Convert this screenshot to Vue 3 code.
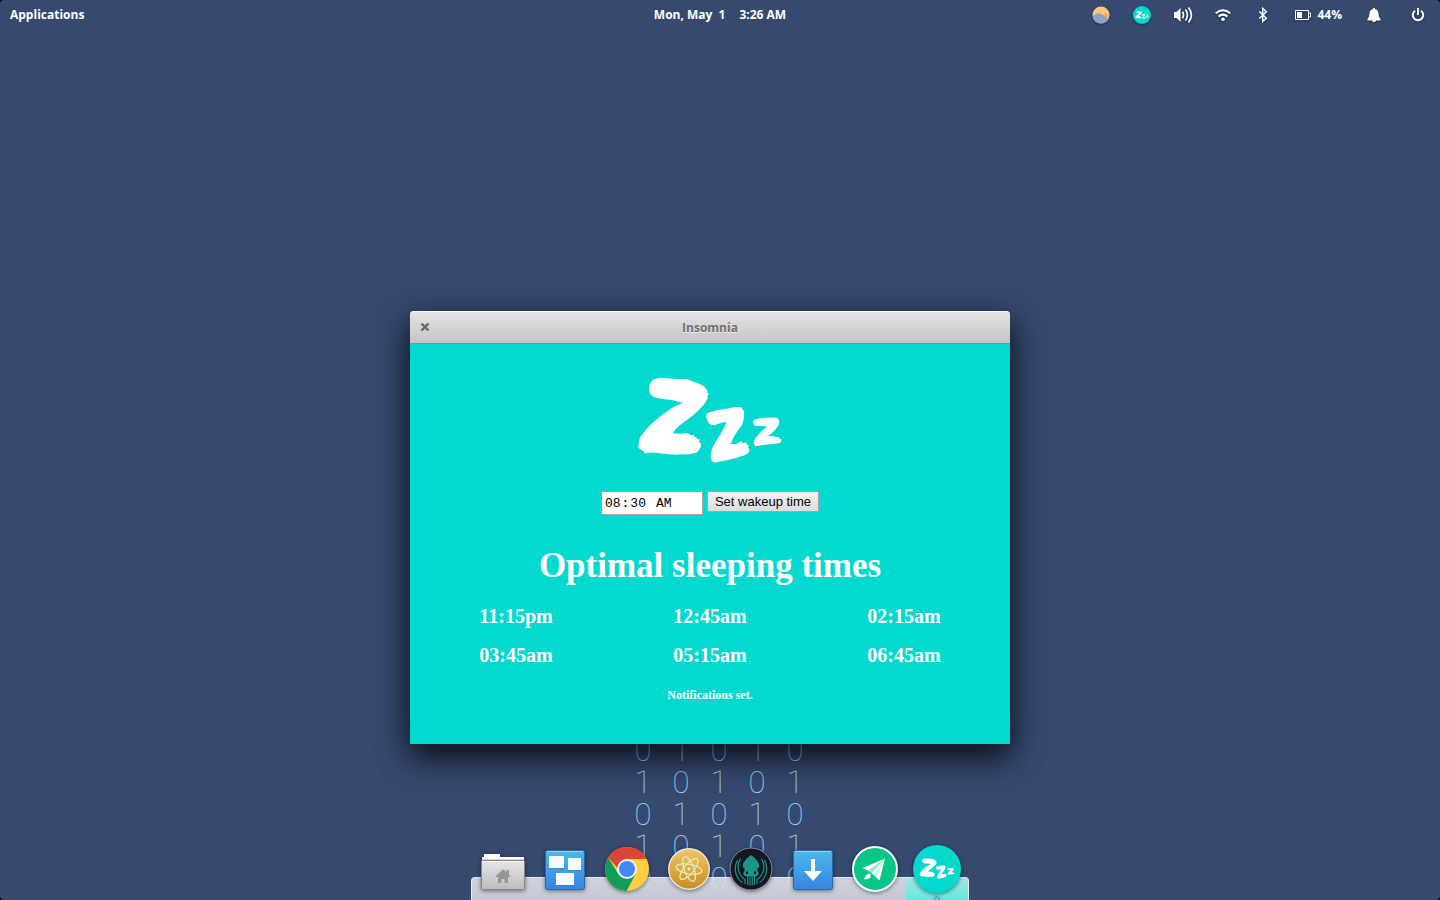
<script setup>
import { ref } from 'vue'

const wakeup = ref('08:30')
const times = [
  ['11:15pm', '12:45am', '02:15am'],
  ['03:45am', '05:15am', '06:45am'],
]
const binary = ['0 1 0 1 0', '1 0 1 0 1', '0 1 0 1 0', '1 0 1 0 1', '0 1 0 1 0']
</script>

<template>
  <div class="desktop">
    <svg class="defs" aria-hidden="true">
      <defs>
        <symbol id="zzz" viewBox="50 33 440 262">
          <path d="M100 42Q118 34 132 38L160 40 200 41 225 50Q252 58 257 69L262 76 260 80 266 84 262 94 264 97Q257 112 245 125Q225 148 185 175Q165 190 158 204Q185 207 196 203L210 206 207 210 222 209 220 214Q232 216 231 222L240 222 236 229 243 235Q244 248 232 261L205 268Q180 266 165 269L130 266 100 262 72 264 70 258Q50 250 54 238L57 235Q54 218 66 207Q90 175 130 145Q165 120 188 113Q170 105 140 102L110 98Q92 94 87 78Q84 52 100 42Z" />
          <path d="M262 143Q290 133 320 130Q346 122 365 126L367 131Q376 137 372 150Q373 175 358 190Q340 212 332 236L350 236 362 228 368 230 364 234 382 232 379 237 388 241 385 246 389 254Q388 264 378 269Q350 280 320 285L285 292Q272 291 272 270Q275 245 290 225Q307 200 320 170Q305 170 292 177Q276 184 266 173Q254 152 262 143Z" />
          <path d="M403 163Q430 155 468 157Q481 160 478 174Q475 190 445 213L464 212 464 215 478 215 477 219 486 223Q487 230 478 234Q450 236 408 243Q400 240 404 223Q420 200 442 184Q420 180 408 182Q394 175 403 163Z" />
        </symbol>
        <linearGradient id="blue" x1="0" y1="0" x2="0" y2="1">
          <stop offset="0" stop-color="#4cb9ea" /><stop offset="1" stop-color="#3684e2" />
        </linearGradient>
        <linearGradient id="folder" x1="0" y1="0" x2="0" y2="1">
          <stop offset="0" stop-color="#e6e6e6" /><stop offset="1" stop-color="#bdbdbd" />
        </linearGradient>
        <linearGradient id="gold" x1="0" y1="0" x2="0" y2="1">
          <stop offset="0" stop-color="#edc869" /><stop offset="1" stop-color="#cd8b1d" />
        </linearGradient>
      </defs>
    </svg>

    <header class="panel">
      <button class="apps"><span>Applications</span></button>
      <button class="clock"><span>Mon, May&nbsp; 1</span><span>3:26 AM</span></button>
      <div class="indicators">
        <button aria-label="Night light">
          <svg width="20" height="22" viewBox="1 0 20 22">
            <circle cx="11" cy="11" r="8.500" fill="#ffc876" />
            <path d="M13.500 9.500q3-1 4.500 2.500l-1 2z" fill="#f79a4b" />
            <path d="M3 12q4-4 8.500-2 3 1.500 7 5A8.500 8.500 0 0 1 3 14z" fill="#8f9fca" />
          </svg>
        </button>
        <button aria-label="Insomnia">
          <svg width="22" height="22" viewBox="0 0 22 22" fill="#fff">
            <circle cx="11" cy="11" r="9" fill="#04d9cd" />
            <use href="#zzz" x="4" y="7" width="14" height="8" />
          </svg>
        </button>
        <button aria-label="Volume">
          <svg width="20" height="22" viewBox="0 0 20 22" fill="none" stroke="#fff" stroke-width="1.700">
            <path d="M1 8h2.500L7.500 4v14l-4-4H1z" fill="#fff" stroke="none" />
            <path d="M9.500 7.700q2 3.300 0 6.600M12.500 5.500q3.800 5.500 0 11M15.500 3.500q5.800 7.500 0 15" />
          </svg>
        </button>
        <button aria-label="Wireless">
          <svg width="20" height="22" viewBox="0 0 20 22" fill="none" stroke="#fff" stroke-width="2">
            <path d="M2.700 9.200q7.300-6 14.600 0M5.500 12.500q4.500-3.700 9 0" />
            <circle cx="10" cy="15.300" r="1.800" fill="#fff" stroke="none" />
          </svg>
        </button>
        <button aria-label="Bluetooth">
          <svg width="20" height="22" viewBox="0 0 20 22" fill="none" stroke="#fff" stroke-width="1.500">
            <path d="M6.300 7.500l7 6.700-3.600 3.300V4.500l3.600 3.300-7 6.700" />
          </svg>
        </button>
        <button class="battery" aria-label="Battery 44%">
          <svg width="20" height="22" viewBox="0 0 20 22">
            <path d="M2.500 6.500h13v9h-13zM16 9h1.500v4H16" fill="none" stroke="#fff" />
            <path d="M4 8h5v6H4z" fill="#fff" />
          </svg>
          <span>44%</span>
        </button>
        <button aria-label="Notifications">
          <svg width="24" height="22" viewBox="0 0 24 22" fill="#fff">
            <path d="M12 4q1.300 0 1.300 1.300 3 .9 3.200 4.200.1 4 2 5.500v1.500h-13V15q1.900-1.500 2-5.500.2-3.300 3.200-4.200Q10.700 4 12 4zM10 16.500h4q-.5 1.700-2 1.700t-2-1.700z" />
          </svg>
        </button>
        <button aria-label="Session">
          <svg width="24" height="22" viewBox="0 0 24 22" fill="none" stroke="#fff" stroke-width="2">
            <path d="M9 6.800a5.200 5.200 0 1 0 6 0M12 4v7" />
          </svg>
        </button>
      </div>
    </header>

    <div class="wallpaper" aria-hidden="true">
      <span v-for="c in 5" :key="c">{{ binary[c - 1] }}</span>
    </div>

    <main class="window">
      <div class="titlebar">
        <button class="close" aria-label="Close">
          <svg width="10" height="10" viewBox="0 0 10 10" stroke="#666" stroke-width="2.400"><path d="M1.500 1.500l7 7M8.500 1.500l-7 7" /></svg>
        </button>
        <span>Insomnia</span>
      </div>
      <div class="content">
        <svg class="logo" fill="#fff" role="img" aria-label="Zzz"><use href="#zzz" width="100%" height="100%" /></svg>
        <form class="alarm" @submit.prevent>
          <input v-model="wakeup" type="time" aria-label="Wakeup time" />
          <button type="submit">Set wakeup time</button>
        </form>
        <h1>Optimal sleeping times</h1>
        <table>
          <tbody>
            <tr v-for="row in times" :key="row[0]"><td v-for="t in row" :key="t">{{ t }}</td></tr>
          </tbody>
        </table>
        <p>Notifications set.</p>
      </div>
    </main>

    <nav class="dock" aria-label="Dock">
      <button aria-label="Files">
        <svg viewBox="0 0 62 65">
          <path d="M12 19h16v3h24v8H10v-8h2z" fill="#fcfcfc" />
          <path d="M10 24.500h42" stroke="#d8d8d8" />
          <rect x="9.500" y="25.500" width="43" height="29" rx="1" fill="url(#folder)" stroke="#858585" />
          <path d="M10.500 26.500h41" stroke="#f8f8f8" />
          <path d="M31 34l3.500 3.200V35H37v4.500l2 2.500h-3v6h-3.500v-4h-3v4H26v-6h-3z" fill="#969696" />
        </svg>
      </button>
      <button aria-label="Multitasking View">
        <svg viewBox="0 0 62 65">
          <rect x="11.500" y="15.500" width="39" height="39" rx="2" fill="url(#blue)" stroke="#2b69ab" />
          <path d="M13 16.500h36" stroke="#8bd6f3" />
          <path d="M15 22h15v12H15zM34 24h13v12H34zM22 39h18v12H22z" fill="#2d76bd" opacity=".5" />
          <path d="M15 21h15v12H15zM34 23h13v12H34zM22 38h18v12H22z" fill="#f4fafd" />
        </svg>
      </button>
      <button aria-label="Chrome">
        <svg viewBox="0 0 62 65">
          <circle cx="31" cy="34" r="22" fill="#ffcd40" />
          <path d="M12.200 22.500A22 22 0 0 0 30.500 56l9.200-17L31 34l-8.700 5z" fill="#109d58" />
          <path d="M12.200 22.500A22 22 0 0 1 50.700 24H31q-8 1-9.500 9z" fill="#db4437" />
          <circle cx="31" cy="34" r="10" fill="#f2f2f2" />
          <circle cx="31" cy="34" r="8" fill="#4587f4" />
        </svg>
      </button>
      <button aria-label="Atom">
        <svg viewBox="0 0 62 65">
          <circle cx="31" cy="34" r="20.300" fill="url(#gold)" stroke="#eee9df" stroke-width="1.400" />
          <g fill="none" stroke="#e2f2c9" stroke-width="1.200">
            <ellipse cx="31" cy="34" rx="13" ry="4.800" transform="rotate(10 31 34)" />
            <ellipse cx="31" cy="34" rx="13" ry="4.800" transform="rotate(70 31 34)" />
            <ellipse cx="31" cy="34" rx="13" ry="4.800" transform="rotate(130 31 34)" />
          </g>
          <circle cx="31" cy="34" r="1.600" fill="#e2f2c9" />
        </svg>
      </button>
      <button aria-label="GitKraken">
        <svg viewBox="0 0 62 65">
          <circle cx="31" cy="34" r="21" fill="#141624" stroke="#8b8e96" />
          <path d="M31 20q5.500 3.500 8 9 1 3-1.500 4.500-.8 2 1 4 .7 3-2.300 3.700H25.800q-3-.7-2.300-3.700 1.800-2 1-4Q22 32 23 29q2.500-5.500 8-9z" fill="#1a9688" />
          <path d="M30 39v11.500M32.200 39v11.500M27.700 40v10M34.500 40v10M20.500 23.500q-5 9 0 16.500 2 3 4.500 4.500v4.500M17.500 25q-5 10 1 19 2 2.500 4 3.500M41.500 23.500q5 9 0 16.500-2 3-4.500 4.500v4.500M44.500 25q5 10-1 19-2 2.500-4 3.500" fill="none" stroke="#1a9688" stroke-width="1.200" />
          <path d="M26 36.500h2v2.500h-2zM34 36.500h2v2.500h-2z" fill="#141624" />
        </svg>
      </button>
      <button aria-label="Downloads">
        <svg viewBox="0 0 62 65">
          <rect x="11.500" y="15.500" width="39" height="39" rx="2" fill="url(#blue)" stroke="#2b69ab" />
          <path d="M13 16.500h36" stroke="#8bd6f3" />
          <path d="M29 24h4v12h7l-9 10-9-10h7z" fill="#fff" />
        </svg>
      </button>
      <button aria-label="Mail">
        <svg viewBox="0 0 62 65">
          <circle cx="31" cy="34" r="22" fill="#09c587" stroke="#fff" stroke-width="2" />
          <path d="M41 23.500L18.500 33l6 3z" fill="#fff" />
          <path d="M41 23.500L24.500 36l3 2z" fill="#a4e8d0" />
          <path d="M41 23.500L27.500 38l8 7.500z" fill="#fff" />
          <path d="M41 23.500L29.500 39.500l3.500 2z" fill="#c9f3e4" />
          <path d="M26.500 38.500q-5 0-6.500 6 4.500 0 6.500-2z" fill="#fff" />
        </svg>
      </button>
      <button class="active" aria-label="Insomnia">
        <svg viewBox="0 0 62 65" fill="#fff">
          <circle cx="31" cy="34" r="24" fill="#04d9cd" />
          <use href="#zzz" x="13" y="23" width="36" height="21" />
          <circle cx="31" cy="64" r="2" fill="#7cc8f5" stroke="#3f8fd8" />
        </svg>
      </button>
    </nav>
  </div>
</template>

<style>
body {
  margin: 0;
  background: #000;
}
</style>

<style scoped>
.desktop {
  position: relative;
  display: flex;
  flex-direction: column;
  height: 100vh;
  overflow: hidden;
  border-radius: 4px;
  background: #364a70;
}
.defs {
  position: absolute;
  width: 0;
  height: 0;
}
button {
  font: inherit;
  color: inherit;
}
.panel {
  display: grid;
  grid-template-columns: 1fr auto 1fr;
  align-items: center;
  height: 30px;
  padding: 0 10px;
  color: #fff;
  font: bold 12px "Open Sans", "Noto Sans", sans-serif;
  text-shadow: 0 1px 2px rgba(0, 0, 0, 0.4);
}
.panel button {
  display: flex;
  align-items: center;
  padding: 0;
  border: 0;
  background: none;
}
.panel span {
  padding-bottom: 2px;
}
.panel svg {
  display: block;
  filter: drop-shadow(0 1px 1px rgba(0, 0, 0, 0.4));
}
.apps {
  justify-self: start;
}
.panel .clock {
  gap: 14px;
}
.indicators {
  display: flex;
  gap: 20px;
  justify-self: end;
}
.panel .battery {
  gap: 4px;
}
.wallpaper {
  position: absolute;
  top: 735px;
  left: 624px;
  display: grid;
  grid-template-columns: repeat(5, 38px);
  color: #a9dcfa;
  font: 100 31px/32px Roboto, sans-serif;
  text-align: center;
}
.wallpaper span {
  justify-self: center;
  width: 20px;
}
.window {
  position: absolute;
  top: 311px;
  left: 410px;
  width: 600px;
  border-radius: 4px 4px 0 0;
  box-shadow: 0 14px 30px rgba(0, 0, 0, 0.6), 0 8px 36px rgba(0, 0, 0, 0.4);
}
.titlebar {
  display: grid;
  grid-template-columns: 30px 1fr 30px;
  align-items: center;
  height: 32px;
  border-bottom: 1px solid #8b8b8b;
  border-radius: 4px 4px 0 0;
  background: linear-gradient(#e6e6e6, #c4c4c4);
  box-shadow: inset 0 1px #f8f8f8;
  color: #707070;
  font: bold 12px "Open Sans", "Noto Sans", sans-serif;
  text-align: center;
  text-shadow: 0 1px #eee;
}
.close {
  display: flex;
  justify-content: center;
  padding: 0;
  border: 0;
  background: none;
}
.content {
  display: flex;
  flex-direction: column;
  align-items: center;
  padding: 32px 9px 41px;
  background: #03d9ce;
  color: #fff;
  font-family: "Liberation Serif", serif;
  font-weight: bold;
}
.logo {
  width: 146px;
  height: 88px;
}
.alarm {
  display: flex;
  align-items: flex-start;
  gap: 4px;
  margin-top: 27px;
}
.alarm input {
  box-sizing: border-box;
  width: 102px;
  height: 24px;
  padding: 1px 2px;
  border: 1px solid #a4a4a4;
  background: #fff;
  color: #000;
  font: 13px "Liberation Mono", monospace;
}
.alarm input::-webkit-calendar-picker-indicator {
  display: none;
}
.alarm input::-webkit-datetime-edit-ampm-field {
  margin-left: 4px;
}
.alarm button {
  height: 21px;
  padding: 0 7px;
  border: 1px solid #a4a4a4;
  background: linear-gradient(#f4f4f4, #dcdcdc);
  color: #000;
  font: 13px "Liberation Sans", sans-serif;
}
h1 {
  margin: 31px 0 11px;
  font-size: 35px;
  line-height: 40px;
}
table {
  width: 100%;
  border-collapse: collapse;
  table-layout: fixed;
  font-size: 20px;
  line-height: 39px;
  text-align: center;
}
td {
  padding: 0;
}
p {
  margin: 12px 0 0;
  font-size: 12px;
  line-height: 16px;
}
.dock {
  position: absolute;
  bottom: 0;
  left: 50%;
  display: flex;
  padding: 0 1px;
  transform: translateX(-50%);
}
.dock::before {
  content: "";
  position: absolute;
  inset: auto 0 0;
  box-sizing: border-box;
  height: 23px;
  border: 1px solid #e9ebf0;
  border-bottom: 0;
  border-radius: 4px 4px 0 0;
  background: linear-gradient(rgba(222, 225, 232, 0.9), rgba(212, 215, 223, 0.9));
}
.dock button {
  position: relative;
  width: 62px;
  height: 65px;
  padding: 0;
  border: 0;
  background: none;
}
.dock svg {
  display: block;
  width: 62px;
  height: 65px;
  filter: drop-shadow(0 1px 2px rgba(0, 0, 0, 0.5));
}
.dock .active {
  background: linear-gradient(#a5e5e5, #62eae2) bottom / 100% 22px no-repeat;
}
</style>
